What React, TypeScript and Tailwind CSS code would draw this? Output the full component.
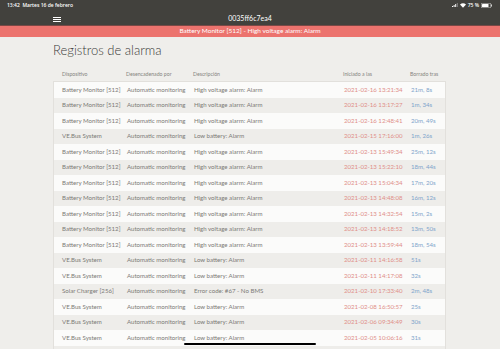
import React from "react";

type Row = { d: string; desc: string; t: string; dur: string };

const BM = "Battery Monitor [512]";
const VE = "VE.Bus System";
const HV = "High voltage alarm: Alarm";
const LB = "Low battery: Alarm";

const rows: Row[] = [
  { d: BM, desc: HV, t: "2021-02-16 13:21:34", dur: "21m, 8s" },
  { d: BM, desc: HV, t: "2021-02-16 13:17:27", dur: "1m, 34s" },
  { d: BM, desc: HV, t: "2021-02-16 12:48:41", dur: "20m, 49s" },
  { d: VE, desc: LB, t: "2021-02-15 17:16:00", dur: "1m, 26s" },
  { d: BM, desc: HV, t: "2021-02-13 15:49:34", dur: "25m, 12s" },
  { d: BM, desc: HV, t: "2021-02-13 15:22:10", dur: "18m, 44s" },
  { d: BM, desc: HV, t: "2021-02-13 15:04:34", dur: "17m, 20s" },
  { d: BM, desc: HV, t: "2021-02-13 14:48:08", dur: "16m, 12s" },
  { d: BM, desc: HV, t: "2021-02-13 14:32:54", dur: "15m, 2s" },
  { d: BM, desc: HV, t: "2021-02-13 14:18:52", dur: "13m, 50s" },
  { d: BM, desc: HV, t: "2021-02-13 13:59:44", dur: "18m, 54s" },
  { d: VE, desc: LB, t: "2021-02-11 14:16:58", dur: "51s" },
  { d: VE, desc: LB, t: "2021-02-11 14:17:08", dur: "32s" },
  { d: "Solar Charger [256]", desc: "Error code: #67 - No BMS", t: "2021-02-10 17:33:40", dur: "2m, 48s" },
  { d: VE, desc: LB, t: "2021-02-08 16:50:57", dur: "25s" },
  { d: VE, desc: LB, t: "2021-02-06 09:34:49", dur: "30s" },
  { d: VE, desc: LB, t: "2021-02-05 10:06:16", dur: "31s" },
];

const cols = "grid grid-cols-[64px_67px_150px_67px_45px]";

export default function App() {
  return (
    <div
      className="w-[500px] h-[349px] overflow-hidden bg-[#efeeeb] relative flex flex-col"
      style={{ fontFamily: "Lato, 'Open Sans', sans-serif" }}
    >
      {/* status bar */}
      <div
        className="h-[10px] shrink-0 bg-[#42413d] flex items-center justify-between pl-[7px] pr-[8px] text-white text-[5px] font-semibold leading-none"
        style={{ fontFamily: "'Open Sans', sans-serif" }}
      >
        <span>13:42&nbsp;&nbsp;Martes 16 de febrero</span>
        <span className="flex items-center gap-[2px]">
          <svg width="6" height="4" viewBox="0 0 6 4"><rect x="0" y="3" width="1" height="1" fill="#fff"/><rect x="1.6" y="2" width="1" height="2" fill="#fff"/><rect x="3.2" y="1" width="1" height="3" fill="#fff"/><rect x="4.8" y="0" width="1" height="4" fill="#888"/></svg>
          <svg width="6" height="5" viewBox="0 0 12 9"><path d="M6 9 L0 2.5 A9 9 0 0 1 12 2.5 Z" fill="#fff"/></svg>
          <span>75 %</span>
          <svg width="11" height="5" viewBox="0 0 22 10"><rect x="0.5" y="0.5" width="19" height="9" rx="2" fill="none" stroke="#fff" strokeWidth="1"/><rect x="2" y="2" width="13" height="6" rx="1" fill="#fff"/><rect x="20.5" y="3" width="1.5" height="4" fill="#fff"/></svg>
        </span>
      </div>
      {/* nav */}
      <div className="h-[15px] shrink-0 bg-[#42413d] flex items-center relative">
        <div className="absolute left-[53px] top-[7px] flex flex-col gap-[1px]">
          <div className="w-[8px] h-[1px] bg-white" />
          <div className="w-[8px] h-[1px] bg-white" />
          <div className="w-[8px] h-[1px] bg-white" />
        </div>
        <div className="flex-1 text-center text-white text-[7px] leading-none pt-[1px]">0035ff6c7ea4</div>
      </div>
      <div className="h-[1px] shrink-0 bg-[#7a4845]" />
      {/* banner */}
      <div className="h-[11px] shrink-0 bg-[#ec736e] flex items-center justify-center text-white text-[6.5px] leading-none">
        Battery Monitor [512] - High voltage alarm: Alarm
      </div>
      {/* content */}
      <div className="pl-[53px] pt-[6px] shrink-0">
        <h1 className="text-[13px] text-[#3b3a38] font-light leading-none h-[26px] pt-[1px]">Registros de alarma</h1>
        <div className="w-[393px]">
          <div className={`${cols} h-[12px] items-center text-[5.2px] text-[#85847f] leading-none`}>
            <div className="pl-[9px]">Dispositivo</div>
            <div className="pl-[9px]">Desencadenado por</div>
            <div className="pl-[9px]">Descripción</div>
            <div className="pl-[9px]">Iniciado a las</div>
            <div className="pl-[9px]">Borrado tras</div>
          </div>
          <div className="border-l border-r border-t border-[#e2e0dc]">
            {rows.map((r, i) => (
              <div
                key={i}
                className={`${cols} h-[15.5px] items-center text-[6.1px] leading-none ${i % 2 === 0 ? "bg-[#fbfbfa]" : "bg-[#eeedea]"}`}
              >
                <div className="pl-[8px] text-[#7b7a76] whitespace-nowrap">{r.d}</div>
                <div className="pl-[9px] text-[#7b7a76] whitespace-nowrap">Automatic monitoring</div>
                <div className="pl-[9px] text-[#7b7a76] whitespace-nowrap">{r.desc}</div>
                <div className="pl-[9px] text-[#e08e88] whitespace-nowrap">{r.t}</div>
                <div className="pl-[9px] text-[#7ea4ca] whitespace-nowrap">{r.dur}</div>
              </div>
            ))}
            <div className="h-[15.5px] bg-[#eeedea]" />
          </div>
        </div>
      </div>
      <div className="absolute left-[184px] top-[343px] w-[132px] h-[2px] rounded-full bg-black" />
    </div>
  );
}
